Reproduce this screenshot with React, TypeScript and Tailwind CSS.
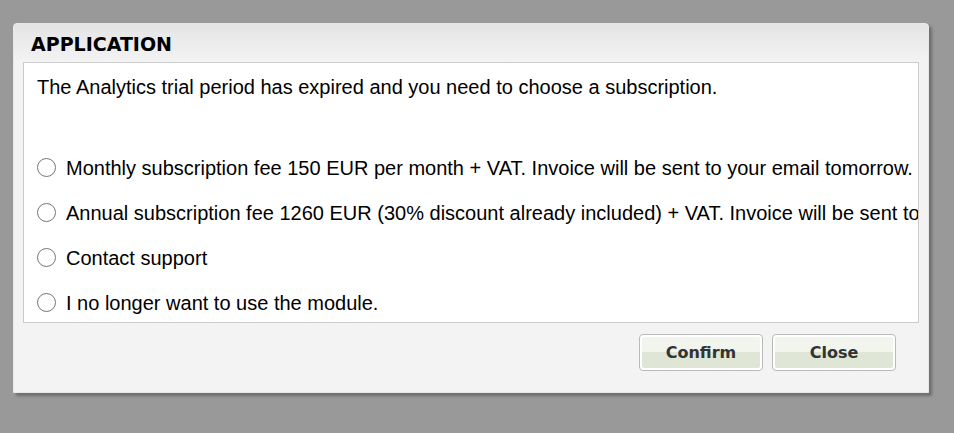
import React, { useState } from "react";

const options = [
  "Monthly subscription fee 150 EUR per month + VAT. Invoice will be sent to your email tomorrow.",
  "Annual subscription fee 1260 EUR (30% discount already included) + VAT. Invoice will be sent to your email tomorrow.",
  "Contact support",
  "I no longer want to use the module.",
];

function Radio({ checked }: { checked: boolean }) {
  return (
    <span className="flex h-[19px] w-[19px] shrink-0 items-center justify-center rounded-full border-[1.5px] border-[#767676] bg-white">
      {checked && <span className="h-[9px] w-[9px] rounded-full bg-[#333]" />}
    </span>
  );
}

function Button({ label }: { label: string }) {
  return (
    <button className="flex h-[37px] w-[124px] flex-col overflow-hidden rounded-[4px] border border-[#b9b9b9] bg-white p-[2px] text-[16px] font-bold text-[#333] [font-family:'DejaVu_Sans',Verdana,sans-serif]">
      <span className="flex h-full w-full flex-col rounded-[2px] bg-[linear-gradient(to_bottom,#f2f4ee_0%,#f2f4ee_50%,#e0e6d6_50%,#e0e6d6_100%)] leading-[32px]">
        {label}
      </span>
    </button>
  );
}

export default function App() {
  const [selected, setSelected] = useState<number | null>(null);

  return (
    <div className="h-[433px] w-[954px] overflow-hidden bg-[#999999] pl-[13px] pt-[23px]">
      <div className="flex h-[370px] w-[916px] flex-col rounded-tl-[4px] rounded-tr-[4px] border border-[#e8e8e8] bg-[#f3f3f3] shadow-[3px_3px_3px_rgba(0,0,0,0.28)]">
        {/* Title */}
        <div className="flex h-[38px] shrink-0 items-center bg-[linear-gradient(to_bottom,#e4e4e4,#f3f3f3)] pl-[17px] pt-[2px]">
          <h1 className="text-[19px] font-bold leading-none text-black [font-family:'DejaVu_Sans',Verdana,sans-serif]">
            APPLICATION
          </h1>
        </div>

        {/* Body */}
        <div className="mx-[9px] h-[261px] shrink-0 overflow-hidden border border-[#cccccc] bg-white pl-[13px] pt-[12px] text-[20px] text-black [font-family:'Liberation_Sans',Arial,sans-serif]">
          <p className="whitespace-nowrap leading-[24px]">
            The Analytics trial period has expired and you need to choose a subscription.
          </p>
          <div className="mt-[46px] flex flex-col">
            {options.map((o, i) => (
              <label
                key={i}
                className="flex h-[45px] cursor-pointer items-center gap-[10px] whitespace-nowrap"
                onClick={() => setSelected(i)}
              >
                <Radio checked={selected === i} />
                <span className="leading-[24px]">{o}</span>
              </label>
            ))}
          </div>
        </div>

        {/* Footer */}
        <div className="flex justify-end gap-[9px] pr-[32px] pt-[11px]">
          <Button label="Confirm" />
          <Button label="Close" />
        </div>
      </div>
    </div>
  );
}
